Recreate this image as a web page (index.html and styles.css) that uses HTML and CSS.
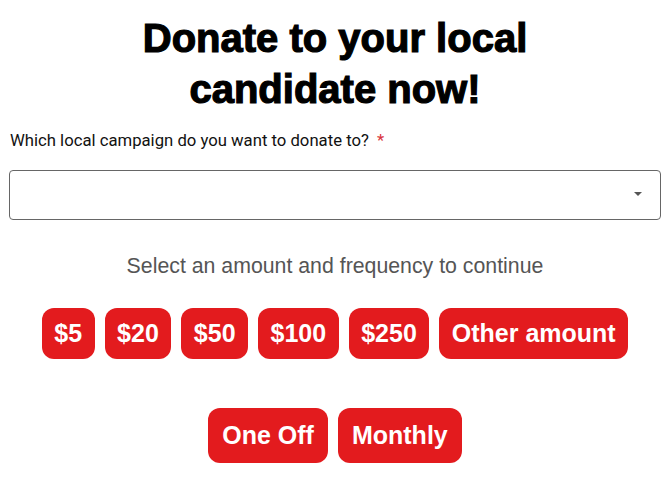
FILE: index.html
```html
<!DOCTYPE html>
<html lang="en">
<head>
    <meta charset="UTF-8">
    <meta name="viewport" content="width=device-width, initial-scale=1.0">
    <title>Donate</title>
    <link rel="stylesheet" href="styles.css">
</head>
<body>
    <div class="container">
        <h1 class="title">Donate to your local<br>candidate now!</h1>

        <label class="field-label" for="campaign">Which local campaign do you want to donate to? <span class="required">*</span></label>
        <div class="select-box">
            <select id="campaign" name="campaign"></select>
            <span class="select-arrow"></span>
        </div>

        <p class="hint">Select an amount and frequency to continue</p>

        <div class="btn-row amounts">
            <button class="btn">$5</button>
            <button class="btn">$20</button>
            <button class="btn">$50</button>
            <button class="btn">$100</button>
            <button class="btn">$250</button>
            <button class="btn">Other amount</button>
        </div>

        <div class="btn-row frequency">
            <button class="btn">One Off</button>
            <button class="btn">Monthly</button>
        </div>
    </div>
</body>
</html>
```

FILE: styles.css
```css
body {
    margin: 0;
    padding: 0;
    background-color: #fff;
    font-family: "Liberation Sans", Arial, sans-serif;
}
.container {
    padding: 0 9px;
}
.title {
    margin: 13px 0 16px;
    font-size: 40px;
    line-height: 51px;
    font-weight: bold;
    text-align: center;
    color: #000;
    -webkit-text-stroke: 1.2px #000;
}
.field-label {
    display: block;
    padding-left: 1px;
    font-family: Roboto, "Liberation Sans", sans-serif;
    font-size: 16.7px;
    line-height: 20px;
    color: #111;
}
.required {
    color: #d9363e;
    margin-left: 4px;
}
.select-box {
    position: relative;
    margin-top: 19px;
}
.select-box select {
    display: block;
    width: 100%;
    height: 50px;
    border: 1px solid #666;
    border-radius: 4px;
    background: #fff;
    appearance: none;
    -webkit-appearance: none;
}
.select-arrow {
    position: absolute;
    right: 19px;
    top: 22px;
    width: 0;
    height: 0;
    border-left: 4px solid transparent;
    border-right: 4px solid transparent;
    border-top: 4px solid #555;
}
.hint {
    margin: 35px 0 0;
    font-size: 21.3px;
    line-height: 22px;
    text-align: center;
    color: #555;
}
.btn-row {
    display: flex;
    justify-content: center;
    gap: 10px;
}
.amounts {
    margin-top: 31px;
}
.frequency {
    margin-top: 49px;
}
.btn {
    border: none;
    border-radius: 12px;
    background-color: #e31b1e;
    color: #fff;
    font-family: "Liberation Sans", Arial, sans-serif;
    font-weight: bold;
    font-size: 25px;
    line-height: 27px;
    padding: 12px 12.5px;
    cursor: pointer;
}
.frequency .btn {
    padding: 14px 14px;
}
```
